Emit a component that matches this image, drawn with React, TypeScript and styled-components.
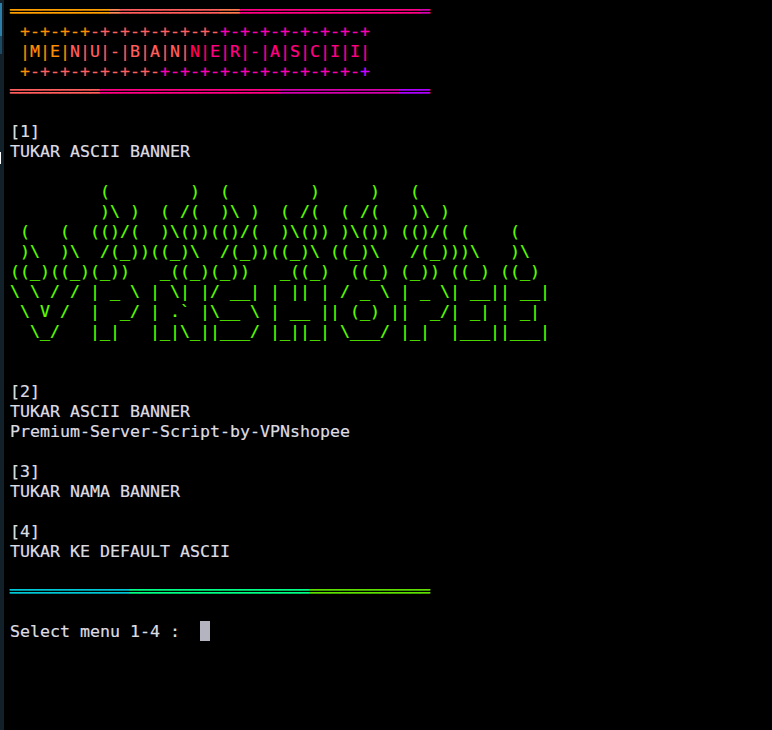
import React from "react";
import styled, { createGlobalStyle } from "styled-components";

const Global = createGlobalStyle`
  html, body { margin: 0; padding: 0; background: #000; height: 100%; overflow: hidden; }
  #root { height: 100%; }
`;

const Window = styled.div`
  display: flex;
  height: 730px;
  background: #000;
`;

const Edge = styled.div`
  width: 4px;
  flex: none;
  display: flex;
  flex-direction: column;
  background: #12202a;
`;

const EdgeSlice = styled.div<{ $h: number; $w: number; $c: string }>`
  height: ${(p) => p.$h}px;
  width: ${(p) => p.$w}px;
  flex: none;
  background: ${(p) => p.$c};
`;

const Terminal = styled.pre`
  margin: 0;
  padding: 1px 0 0 6px;
  flex: 1;
  font-family: "DejaVu Sans Mono", "Liberation Mono", monospace;
  font-size: 16.61px;
  line-height: 22px;
  color: #dcdce2;
  -webkit-text-stroke: 0.2px;
`;

const Line = styled.div`
  height: 20px;
  white-space: pre;
`;

const Run = styled.span<{ $c: string }>`
  color: ${(p) => p.$c};
`;

const Cursor = styled.span`
  display: inline-block;
  width: 10px;
  height: 20px;
  vertical-align: top;
  background: #b4b4c0;
`;

const ORANGE = "#ff8f00";
const SALMON = "#ff5f5f";
const PINK = "#ff0087";
const MAGENTA = "#ff00af";
const DEEP = "#d700af";
const PURPLE = "#af00ff";

type Seg = [string, string];
const rule = (n: number) => "═".repeat(n);

const topRule: Seg[] = [
  ["#ffa000", rule(10)],
  ["#ff8a5a", rule(1)],
  [SALMON, rule(10)],
  ["#ff7a50", rule(2)],
  [PINK, rule(18)],
  [DEEP, rule(1)],
];

const midRule: Seg[] = [
  [SALMON, rule(9)],
  [PINK, rule(18)],
  [DEEP, rule(12)],
  [PURPLE, rule(3)],
];

const bottomRule: Seg[] = [
  ["#00c8d7", rule(12)],
  ["#00ff87", rule(18)],
  ["#5fdf00", rule(12)],
];

const plusA: Seg[] = [
  [ORANGE, " +-+-+-+"],
  [SALMON, "-+-+-+-+-+-+-"],
  [MAGENTA, "+-+-+-+-+-+-+-+"],
];

const menu: Seg[] = [
  [ORANGE, " |M|E|"],
  [SALMON, "N|U|-|B|A|N|"],
  ["#ff005f", "N|"],
  [PINK, "E|R|-|A|S|C|I|I|"],
];

const plusB: Seg[] = [
  [ORANGE, " +"],
  [SALMON, "-+-+-+-+-+-+-"],
  [MAGENTA, "+-+-+-+-+-+-+-+-+-+-"],
  ["#d700ff", "+"],
];

const art = [
  "         (        )  (        )     )   (",
  "         )\\ )  ( /(  )\\ )  ( /(  ( /(   )\\ )",
  " (   (  (()/(  )\\())(()/(  )\\()) )\\()) (()/( (    (",
  " )\\  )\\  /(_))((_)\\  /(_))((_)\\ ((_)\\   /(_)))\\   )\\",
  "((_)((_)(_))   _((_)(_))   _((_)  ((_) (_)) ((_) ((_)",
  "\\ \\ / / | _ \\ | \\| |/ __| | || | / _ \\ | _ \\| __|| __|",
  " \\ V /  |  _/ | .` |\\__ \\ | __ || (_) ||  _/| _| | _|",
  "  \\_/   |_|   |_|\\_||___/ |_||_| \\___/ |_|  |___||___|",
];

const Segs = ({ segs }: { segs: Seg[] }) => (
  <Line>
    {segs.map(([c, t], i) => (
      <Run key={i} $c={c}>
        {t}
      </Run>
    ))}
  </Line>
);

const Blank = ({ n = 1 }: { n?: number }) => (
  <>
    {Array.from({ length: n }, (_, i) => (
      <Line key={i} />
    ))}
  </>
);

export default function App() {
  return (
    <Window>
      <Global />
      <Edge>
        <EdgeSlice $h={3} $w={1} $c="transparent" />
        <EdgeSlice $h={33} $w={2} $c="#2d7fa8" />
        <EdgeSlice $h={18} $w={2} $c="#1c4a63" />
        <EdgeSlice $h={98} $w={1} $c="transparent" />
        <EdgeSlice $h={12} $w={1} $c="#ffffff" />
      </Edge>
      <Terminal>
        <Segs segs={topRule} />
        <Segs segs={plusA} />
        <Segs segs={menu} />
        <Segs segs={plusB} />
        <Segs segs={midRule} />
        <Blank />
        <Line>[1]</Line>
        <Line>TUKAR ASCII BANNER</Line>
        <Blank />
        {art.map((row, i) => (
          <Segs key={i} segs={[["#5fff00", row]]} />
        ))}
        <Blank n={2} />
        <Line>[2]</Line>
        <Line>TUKAR ASCII BANNER</Line>
        <Line>Premium-Server-Script-by-VPNshopee</Line>
        <Blank />
        <Line>[3]</Line>
        <Line>TUKAR NAMA BANNER</Line>
        <Blank />
        <Line>[4]</Line>
        <Line>TUKAR KE DEFAULT ASCII</Line>
        <Blank />
        <Segs segs={bottomRule} />
        <Blank />
        <Line>
          {"Select menu 1-4 :  "}
          <Cursor />
        </Line>
      </Terminal>
    </Window>
  );
}
